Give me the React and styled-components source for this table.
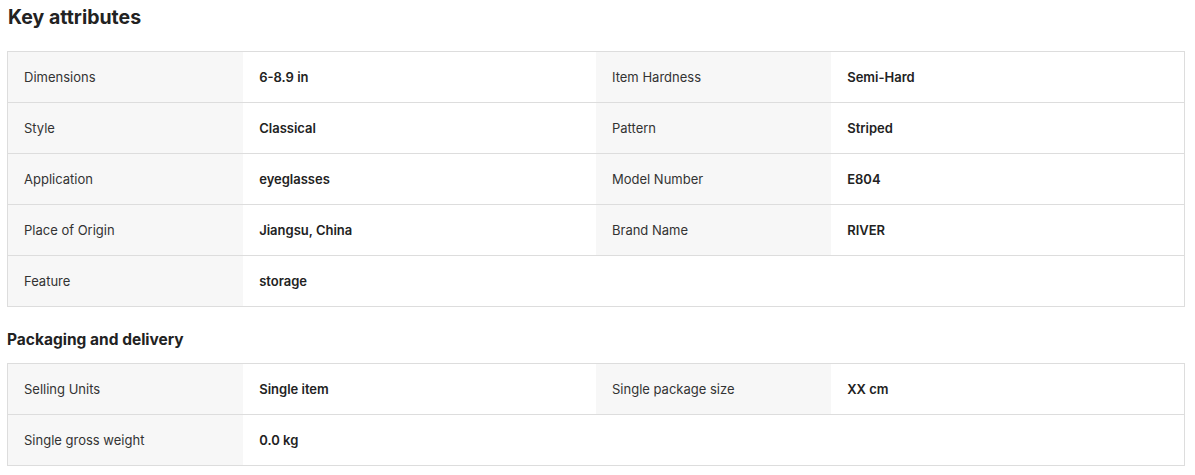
import React from 'react';
import styled, { createGlobalStyle } from 'styled-components';

const GlobalStyle = createGlobalStyle`
  body {
    margin: 0;
    background: #fff;
    font-family: Inter, "Noto Sans", Arial, sans-serif;
    color: #222;
  }
`;

const keyAttributes = [
  ['Dimensions', '6-8.9 in', 'Item Hardness', 'Semi-Hard'],
  ['Style', 'Classical', 'Pattern', 'Striped'],
  ['Application', 'eyeglasses', 'Model Number', 'E804'],
  ['Place of Origin', 'Jiangsu, China', 'Brand Name', 'RIVER'],
  ['Feature', 'storage'],
];

const packaging = [
  ['Selling Units', 'Single item', 'Single package size', 'XX cm'],
  ['Single gross weight', '0.0 kg'],
];

function AttrTable({ rows }) {
  return (
    <Table>
      {rows.map((row, i) => (
        <Row key={i}>
          {[0, 2].map((j) =>
            row[j] ? (
              <React.Fragment key={j}>
                <Label>{row[j]}</Label>
                <Value>{row[j + 1]}</Value>
              </React.Fragment>
            ) : (
              <React.Fragment key={j}>
                <Empty />
                <Empty />
              </React.Fragment>
            )
          )}
        </Row>
      ))}
    </Table>
  );
}

export default function App() {
  return (
    <>
      <GlobalStyle />
      <Page>
        <Title>Key attributes</Title>
        <AttrTable rows={keyAttributes} />
        <SubTitle>Packaging and delivery</SubTitle>
        <AttrTable rows={packaging} />
      </Page>
    </>
  );
}

const Page = styled.div`
  padding: 0 10px 0 7px;
`;

const Title = styled.h2`
  margin: 0;
  height: 51px;
  padding-top: 4px;
  box-sizing: border-box;
  font-size: 19.5px;
  font-weight: 700;
  line-height: 26px;
  color: #222;
  padding-left: 1px;
`;

const SubTitle = styled.h3`
  margin: 0;
  height: 56px;
  padding-top: 8px;
  box-sizing: border-box;
  display: flex;
  align-items: center;
  font-size: 15.5px;
  font-weight: 700;
  color: #222;
`;

const Table = styled.div`
  border: 1px solid #ddd;
  border-bottom: none;
`;

const Row = styled.div`
  display: grid;
  grid-template-columns: 20% 30% 20% 30%;
  height: 51px;
  border-bottom: 1px solid #ddd;
  box-sizing: border-box;
`;

const Cell = styled.div`
  display: flex;
  align-items: center;
  padding-left: 16px;
  font-size: 13px;
`;

const Label = styled(Cell)`
  background: #f7f7f7;
  color: #333;
  font-weight: 400;
`;

const Value = styled(Cell)`
  color: #222;
  font-weight: 600;
`;

const Empty = styled.div``;
